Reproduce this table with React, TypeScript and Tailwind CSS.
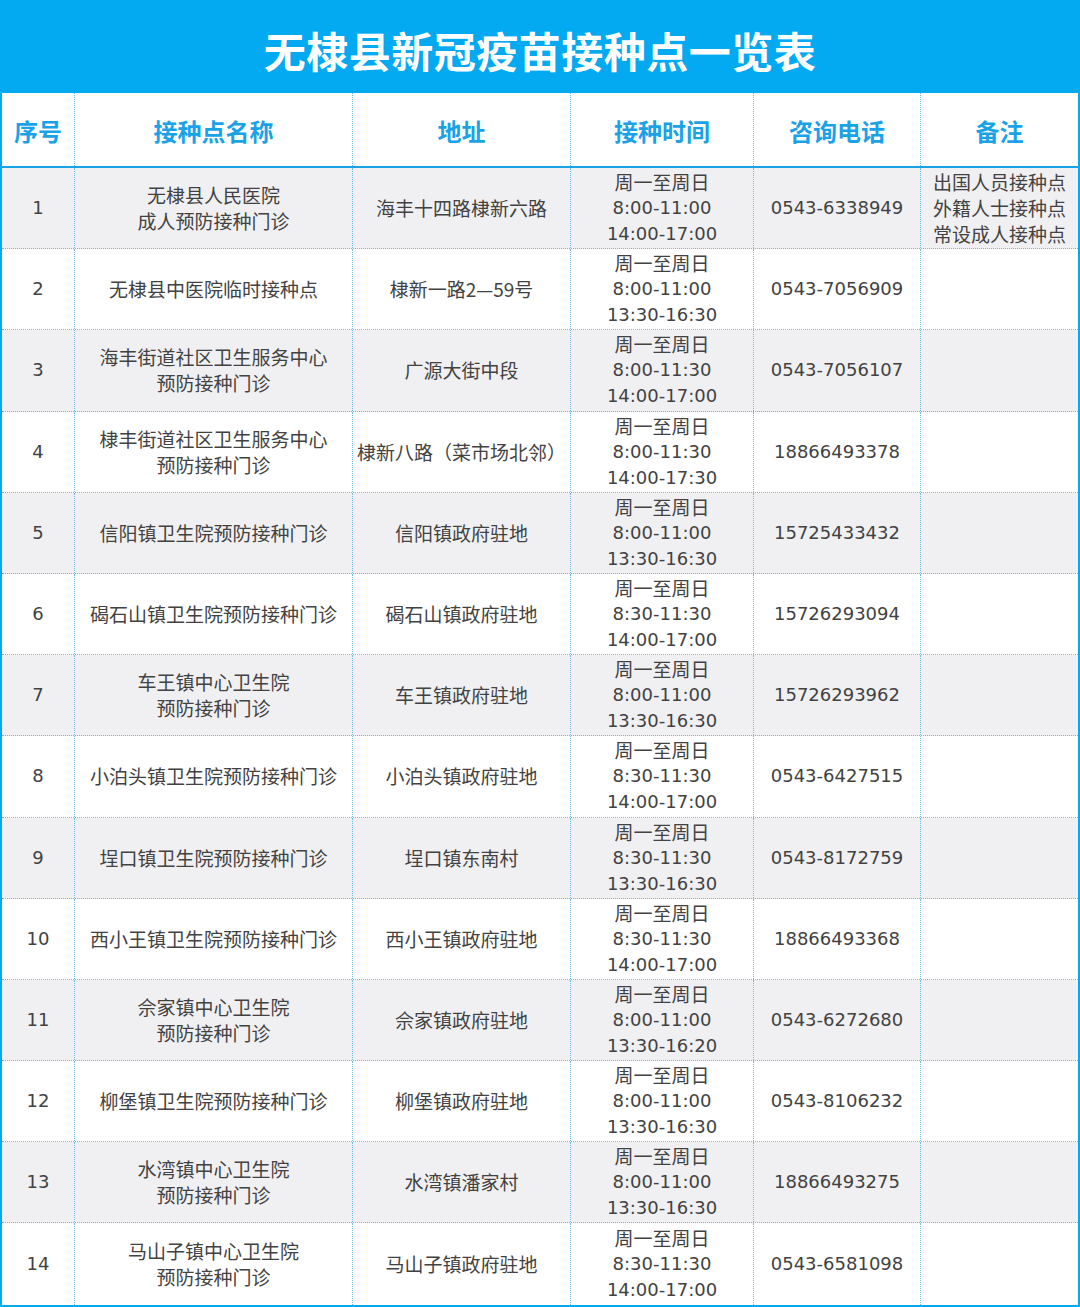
const rows: { name: string[]; addr: string; am: string; pm: string; tel: string; note?: string[] }[] = [
  { name: ["无棣县人民医院", "成人预防接种门诊"], addr: "海丰十四路棣新六路", am: "8:00-11:00", pm: "14:00-17:00", tel: "0543-6338949", note: ["出国人员接种点", "外籍人士接种点", "常设成人接种点"] },
  { name: ["无棣县中医院临时接种点"], addr: "棣新一路2—59号", am: "8:00-11:00", pm: "13:30-16:30", tel: "0543-7056909" },
  { name: ["海丰街道社区卫生服务中心", "预防接种门诊"], addr: "广源大街中段", am: "8:00-11:30", pm: "14:00-17:00", tel: "0543-7056107" },
  { name: ["棣丰街道社区卫生服务中心", "预防接种门诊"], addr: "棣新八路（菜市场北邻）", am: "8:00-11:30", pm: "14:00-17:30", tel: "18866493378" },
  { name: ["信阳镇卫生院预防接种门诊"], addr: "信阳镇政府驻地", am: "8:00-11:00", pm: "13:30-16:30", tel: "15725433432" },
  { name: ["碣石山镇卫生院预防接种门诊"], addr: "碣石山镇政府驻地", am: "8:30-11:30", pm: "14:00-17:00", tel: "15726293094" },
  { name: ["车王镇中心卫生院", "预防接种门诊"], addr: "车王镇政府驻地", am: "8:00-11:00", pm: "13:30-16:30", tel: "15726293962" },
  { name: ["小泊头镇卫生院预防接种门诊"], addr: "小泊头镇政府驻地", am: "8:30-11:30", pm: "14:00-17:00", tel: "0543-6427515" },
  { name: ["埕口镇卫生院预防接种门诊"], addr: "埕口镇东南村", am: "8:30-11:30", pm: "13:30-16:30", tel: "0543-8172759" },
  { name: ["西小王镇卫生院预防接种门诊"], addr: "西小王镇政府驻地", am: "8:30-11:30", pm: "14:00-17:00", tel: "18866493368" },
  { name: ["佘家镇中心卫生院", "预防接种门诊"], addr: "佘家镇政府驻地", am: "8:00-11:00", pm: "13:30-16:20", tel: "0543-6272680" },
  { name: ["柳堡镇卫生院预防接种门诊"], addr: "柳堡镇政府驻地", am: "8:00-11:00", pm: "13:30-16:30", tel: "0543-8106232" },
  { name: ["水湾镇中心卫生院", "预防接种门诊"], addr: "水湾镇潘家村", am: "8:00-11:00", pm: "13:30-16:30", tel: "18866493275" },
  { name: ["马山子镇中心卫生院", "预防接种门诊"], addr: "马山子镇政府驻地", am: "8:30-11:30", pm: "14:00-17:00", tel: "0543-6581098" },
];

const headers = ["序号", "接种点名称", "地址", "接种时间", "咨询电话", "备注"];

const cols = "grid grid-cols-[72px_278px_218px_183px_167px_158px]";
const cell = "flex flex-col items-center justify-center text-center";
const sep = "border-l border-dotted border-[#6bbbe6]";
const num = "font-['DejaVu_Sans',sans-serif] text-[18px]";

export default function App() {
  return (
    <div className="w-[1080px] h-[1307px] overflow-hidden bg-[#03a9f1] font-['Noto_Sans_CJK_SC',sans-serif] text-[19px] leading-[26px] text-[#424242]">
      <div className="h-[93px] flex items-center justify-center pt-[6px]">
        <h1 className="text-[42px] font-bold text-white tracking-[0.5px]">无棣县新冠疫苗接种点一览表</h1>
      </div>
      <div className="mx-[2px] bg-white">
        <div className={`${cols} h-[75px] border-b-2 border-[#18a3e6]`}>
          {headers.map((h, i) => (
            <div key={h} className={`${cell} ${i > 0 ? sep : ""} pt-[2px]`}>
              <span className="text-[24px] font-bold text-[#1aa2e8]">{h}</span>
            </div>
          ))}
        </div>
        {rows.map((r, i) => (
          <div
            key={i}
            className={`${cols} h-[81.2px] ${i % 2 === 0 ? "bg-[#f0f0f2]" : "bg-white"} ${i < rows.length - 1 ? "border-b border-dotted border-[#6bbbe6]" : ""}`}
          >
            <div className={cell}>
              <span className={num}>{i + 1}</span>
            </div>
            <div className={`${cell} ${sep}`}>
              {r.name.map((n) => (
                <span key={n}>{n}</span>
              ))}
            </div>
            <div className={`${cell} ${sep}`}>
              <span className="whitespace-nowrap">{r.addr}</span>
            </div>
            <div className={`${cell} ${sep}`}>
              <span>周一至周日</span>
              <span className={num}>{r.am}</span>
              <span className={num}>{r.pm}</span>
            </div>
            <div className={`${cell} ${sep}`}>
              <span className={num}>{r.tel}</span>
            </div>
            <div className={`${cell} ${sep}`}>
              {r.note?.map((n) => (
                <span key={n}>{n}</span>
              ))}
            </div>
          </div>
        ))}
      </div>
    </div>
  );
}
